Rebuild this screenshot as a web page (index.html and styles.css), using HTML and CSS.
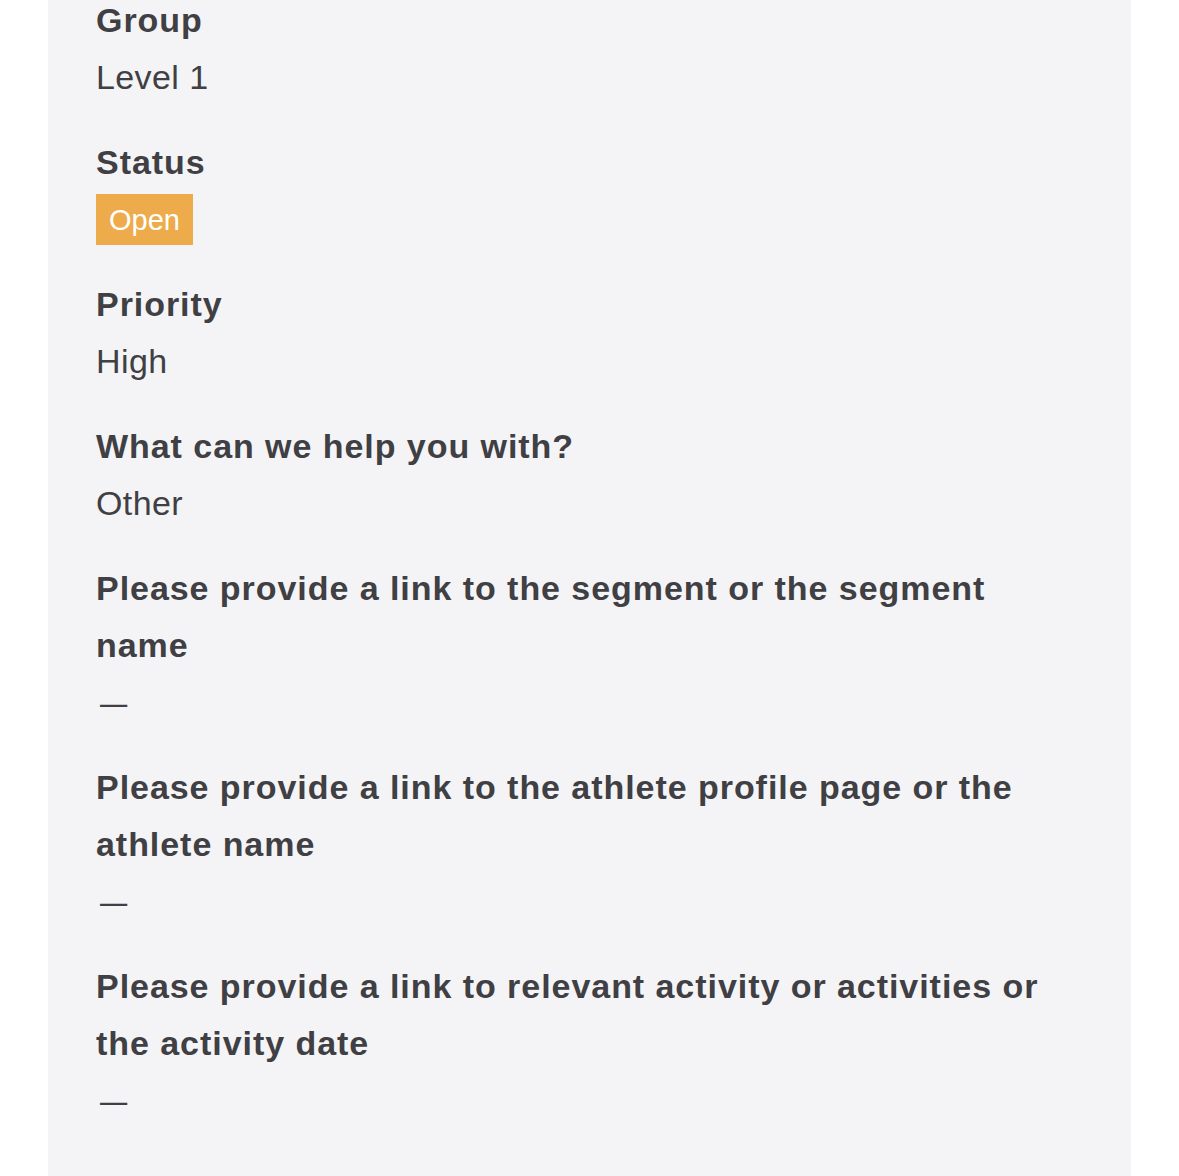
FILE: index.html
```html
<!DOCTYPE html>
<html lang="en">
<head>
<meta charset="utf-8">
<title>Ticket details</title>
<link rel="stylesheet" href="styles.css">
</head>
<body>
<div class="panel">
  <dl class="fields">
    <div class="field">
      <dt class="label">Group</dt>
      <dd class="value">Level 1</dd>
    </div>
    <div class="field">
      <dt class="label">Status</dt>
      <dd class="value value-badge"><span class="badge">Open</span></dd>
    </div>
    <div class="field">
      <dt class="label">Priority</dt>
      <dd class="value">High</dd>
    </div>
    <div class="field">
      <dt class="label">What can we help you with?</dt>
      <dd class="value">Other</dd>
    </div>
    <div class="field">
      <dt class="label">Please provide a link to the segment or the segment name</dt>
      <dd class="value"><span class="dash">—</span></dd>
    </div>
    <div class="field">
      <dt class="label">Please provide a link to the athlete profile page or the athlete name</dt>
      <dd class="value"><span class="dash">—</span></dd>
    </div>
    <div class="field">
      <dt class="label">Please provide a link to relevant activity or activities or the activity date</dt>
      <dd class="value"><span class="dash">—</span></dd>
    </div>
  </dl>
</div>
</body>
</html>
```
FILE: styles.css
```css
html, body {
  margin: 0;
  padding: 0;
  background: #ffffff;
}

body {
  font-family: "Liberation Sans", Arial, Helvetica, sans-serif;
  color: #3f3f44;
  overflow: hidden;
}

.panel {
  margin: 0 48px;
  padding: 0 48px;
  background: #f4f4f6;
  min-height: 100vh;
  box-sizing: border-box;
}

.fields {
  margin: 0;
  padding: 0;
  position: relative;
  top: -8px;
  display: flex;
  flex-direction: column;
  gap: 28px;
}

.field {
  display: flex;
  flex-direction: column;
}

.label {
  margin: 0;
  font-size: 34px;
  line-height: 57px;
  font-weight: 700;
  letter-spacing: 0.95px;
}

.value {
  margin: 0;
  font-size: 34px;
  line-height: 57px;
  font-weight: 400;
  letter-spacing: 0.4px;
}

.dash {
  display: inline-block;
  transform: translateX(4px) scaleX(0.8);
  transform-origin: left center;
}

.value-badge {
  height: 57px;
  display: flex;
  align-items: center;
}

.badge {
  display: inline-block;
  height: 51px;
  box-sizing: border-box;
  padding: 2px 13px 0;
  line-height: 49px;
  font-size: 29px;
  letter-spacing: 0;
  background: #eeab4b;
  color: #ffffff;
}
```
